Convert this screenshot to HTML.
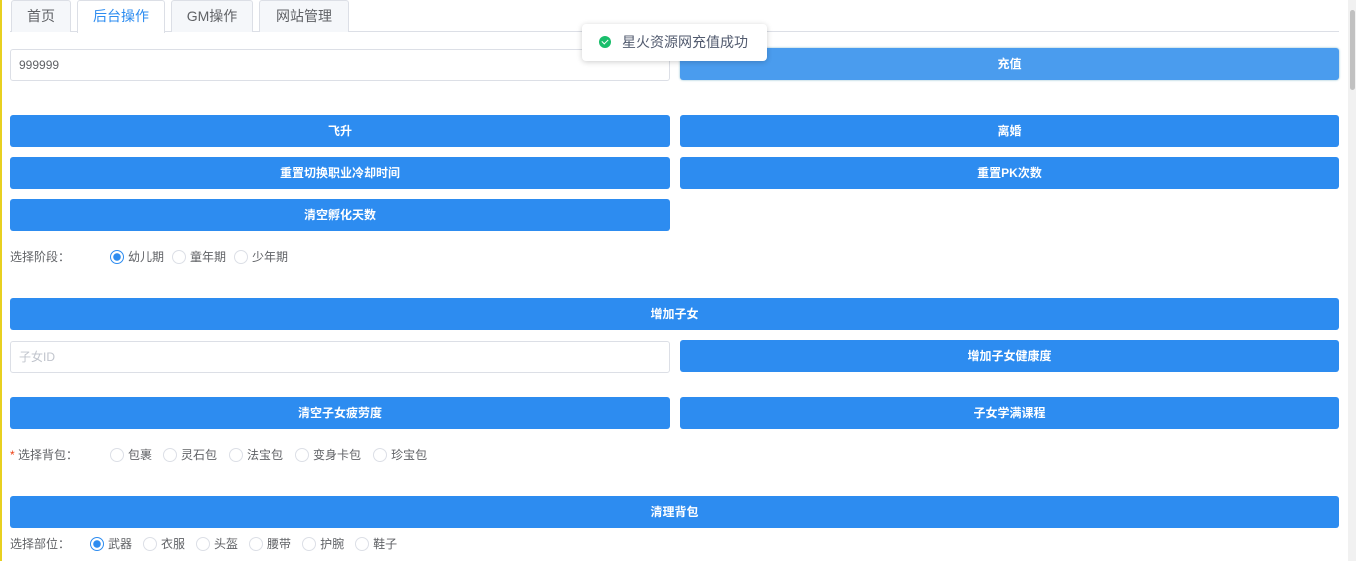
<!DOCTYPE html><html><head><meta charset="utf-8"><style>
body{margin:0;width:1356px;height:561px;overflow:hidden;background:#fff;font-family:"Liberation Sans","Noto Sans CJK SC",sans-serif;position:relative}
.a{position:absolute;box-sizing:border-box}
.tab{top:0;height:32px;border:1px solid #dcdfe6;border-bottom:none;background:#f5f7fa;border-radius:3px 3px 0 0;font-size:14px;color:#606266;text-align:center;line-height:31px}
.btn{background:#2d8cf0;color:#fff;font-size:12px;font-weight:bold;text-align:center;line-height:32px;height:32px;border-radius:3px}
.inp{height:32px;border:1px solid #dcdfe6;border-radius:3px;font-size:12px;line-height:30px;padding-left:8px;color:#606266}
.l{font-size:12px;color:#606266;line-height:16px;white-space:nowrap}
.r{display:inline-block;width:14px;height:14px;border:1px solid #dcdfe6;border-radius:50%;vertical-align:-3px;margin-right:4px;box-sizing:border-box}
.r.on{border-color:#2d8cf0;background:radial-gradient(#2d8cf0 3.5px,#fff 4px)}
.row span.o{margin-right:11px}
</style></head><body>
<div class="a" style="left:0;top:0;width:2px;height:561px;background:#e8d020"></div>
<div class="a" style="left:1348px;top:0;width:8px;height:561px;background:#f1f1f1"></div>
<div class="a" style="left:1350px;top:10px;width:5px;height:80px;background:#c1c1c1;border-radius:3px"></div>
<div class="a" style="left:10px;top:31px;width:1329px;height:1px;background:#dcdfe6"></div>
<div class="a tab" style="left:11px;width:60px">首页</div>
<div class="a tab" style="left:77px;width:88px;background:#fff;color:#2d8cf0;height:33px">后台操作</div>
<div class="a tab" style="left:171px;width:82px">GM操作</div>
<div class="a tab" style="left:259px;width:90px">网站管理</div>
<div class="a inp" style="left:10px;top:49px;width:660px">999999</div>
<div class="a btn" style="left:680px;top:48px;width:659px;background:#4a9cee;box-shadow:0 0 2px #8bc">充值</div>
<div class="a btn" style="left:10px;top:115px;width:660px">飞升</div>
<div class="a btn" style="left:680px;top:115px;width:659px">离婚</div>
<div class="a btn" style="left:10px;top:157px;width:660px">重置切换职业冷却时间</div>
<div class="a btn" style="left:680px;top:157px;width:659px">重置PK次数</div>
<div class="a btn" style="left:10px;top:199px;width:660px">清空孵化天数</div>
<div class="a l" style="left:10px;top:249px">选择阶段：</div>
<div class="a l row" style="left:110px;top:249px"><span class="r on"></span><span class="o" style="margin-right:8px">幼儿期</span><span class="r"></span><span class="o" style="margin-right:8px">童年期</span><span class="r"></span>少年期</div>
<div class="a btn" style="left:10px;top:298px;width:1329px">增加子女</div>
<div class="a inp" style="left:10px;top:341px;width:660px;color:#c0c4cc">子女ID</div>
<div class="a btn" style="left:680px;top:340px;width:659px">增加子女健康度</div>
<div class="a btn" style="left:10px;top:397px;width:660px">清空子女疲劳度</div>
<div class="a btn" style="left:680px;top:397px;width:659px">子女学满课程</div>
<div class="a l" style="left:10px;top:447px"><span style="color:#ed4014">*</span> 选择背包：</div>
<div class="a l row" style="left:110px;top:447px"><span class="r"></span><span class="o">包裹</span><span class="r"></span><span class="o" style="margin-right:12px">灵石包</span><span class="r"></span><span class="o" style="margin-right:12px">法宝包</span><span class="r"></span><span class="o" style="margin-right:12px">变身卡包</span><span class="r"></span>珍宝包</div>
<div class="a btn" style="left:10px;top:496px;width:1329px">清理背包</div>
<div class="a l" style="left:10px;top:536px">选择部位：</div>
<div class="a l row" style="left:90px;top:536px"><span class="r on"></span><span class="o">武器</span><span class="r"></span><span class="o">衣服</span><span class="r"></span><span class="o">头盔</span><span class="r"></span><span class="o">腰带</span><span class="r"></span><span class="o">护腕</span><span class="r"></span>鞋子</div>
<div class="a" style="left:582px;top:24px;width:185px;height:37px;background:#fff;border-radius:4px;box-shadow:0 1px 6px rgba(0,0,0,.2);font-size:14px;color:#515a6e;line-height:37px;padding-left:17px">
<span style="display:inline-block;width:12px;height:12px;border-radius:50%;background:#19be6b;vertical-align:-1px;margin-right:11px;position:relative"><span style="position:absolute;left:4px;top:2px;width:3px;height:5px;border:solid #fff;border-width:0 1px 1px 0;transform:rotate(45deg)"></span></span>星火资源网充值成功</div>
</body></html>
